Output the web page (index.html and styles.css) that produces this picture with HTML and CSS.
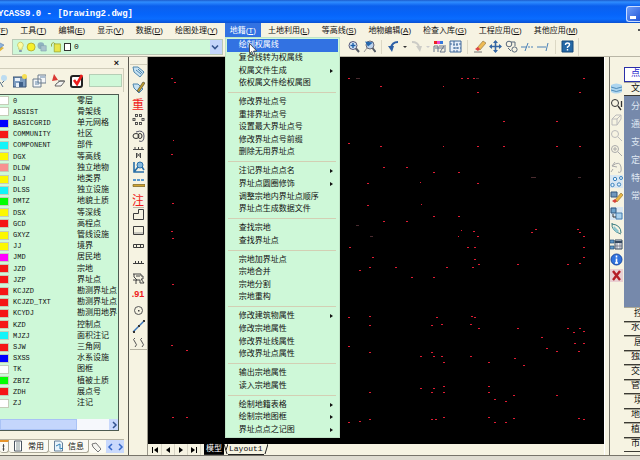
FILE: index.html
```
<!DOCTYPE html>
<html lang="zh-CN">
<head>
<meta charset="utf-8">
<title>CASS9.0 - [Drawing2.dwg]</title>
<link rel="stylesheet" href="styles.css">
</head>
<body>
<header class="titlebar">
  <h1 class="title">YCASS9.0 - [Drawing2.dwg]</h1>
  <button class="minimize" aria-label="最小化"></button>
</header>

<nav class="menubar">
  <button class="menu">文件(<u>F</u>)</button>
  <button class="menu">工具(<u>T</u>)</button>
  <button class="menu">编辑(<u>E</u>)</button>
  <button class="menu">显示(<u>V</u>)</button>
  <button class="menu">数据(<u>D</u>)</button>
  <button class="menu">绘图处理(<u>Y</u>)</button>
  <div class="menu-holder">
    <button class="menu open">地籍(<u>T</u>)</button>
    <div class="popup">
      <button class="item selected">绘制权属线</button>
      <button class="item">复合线转为权属线</button>
      <button class="item sub">权属文件生成</button>
      <button class="item">依权属文件绘权属图</button>
      <hr class="rule">
      <button class="item">修改界址点号</button>
      <button class="item">重排界址点号</button>
      <button class="item">设置最大界址点号</button>
      <button class="item">修改界址点号前缀</button>
      <button class="item">删除无用界址点</button>
      <hr class="rule">
      <button class="item sub">注记界址点点名</button>
      <button class="item sub">界址点圆圈修饰</button>
      <button class="item">调整宗地内界址点顺序</button>
      <button class="item">界址点生成数据文件</button>
      <hr class="rule">
      <button class="item">查找宗地</button>
      <button class="item">查找界址点</button>
      <hr class="rule">
      <button class="item">宗地加界址点</button>
      <button class="item">宗地合并</button>
      <button class="item">宗地分割</button>
      <button class="item">宗地重构</button>
      <hr class="rule">
      <button class="item sub">修改建筑物属性</button>
      <button class="item">修改宗地属性</button>
      <button class="item">修改界址线属性</button>
      <button class="item">修改界址点属性</button>
      <hr class="rule">
      <button class="item">输出宗地属性</button>
      <button class="item">读入宗地属性</button>
      <hr class="rule">
      <button class="item sub">绘制地籍表格</button>
      <button class="item sub">绘制宗地图框</button>
      <button class="item sub">界址点点之记图</button>
      <svg class="cursor" viewBox="0 0 9 13"><path d="M.5 .5v10l2.3-2 1.7 4 1.6-.7-1.6-3.8h3.2z" fill="#fff" stroke="#333" stroke-width=".8"/></svg>
    </div>
  </div>
  <button class="menu">土地利用(<u>L</u>)</button>
  <button class="menu">等高线(<u>S</u>)</button>
  <button class="menu">地物编辑(<u>A</u>)</button>
  <button class="menu">检查入库(<u>G</u>)</button>
  <button class="menu">工程应用(<u>C</u>)</button>
  <button class="menu">其他应用(<u>M</u>)</button>
  <button class="mdi-minimize" aria-label="最小化图形"></button>
</nav>

<div class="toolbar">
  <button class="icon half" aria-label="图层"><svg viewBox="0 0 13 13"><path d="M1 8l5-3 6 3-5 4z" fill="#e4b93a"/><path d="M1 5l5-3 6 3-5 4z" fill="#8fb4dd" stroke="#5d7fae" stroke-width=".6"/></svg></button>
  <div class="combo">
    <svg class="combo-icons" viewBox="0 0 54 13">
      <path d="M5 1a3.4 3.4 0 0 0-2 6v2h4v-2a3.4 3.4 0 0 0-2-6z" fill="#fdfca0" stroke="#b8a83a" stroke-width=".6"/><path d="M3.500 10h3v2h-3z" fill="#7d8fa8"/>
      <circle cx="17" cy="6.500" r="4.500" fill="#f7f02a" stroke="#aa9b22" stroke-width=".8"/>
      <circle cx="28" cy="5" r="3.800" fill="#8fb2c0"/><path d="M28 5h6v6h-6z" fill="#a9c3cc" stroke="#7a9aaa" stroke-width=".6"/>
      <path d="M40 6V3q2-3 4 0v2" fill="none" stroke="#93a02a"/><path d="M43 3h7v9h-7z" fill="#e9e64a" stroke="#93a02a" stroke-width=".8"/>
    </svg>
    <span class="swatch-box"></span>
    <select class="layer-select" aria-label="当前图层"><option>0</option></select>
    <span class="drop"><svg viewBox="0 0 10 12"><path d="M2 4.500l3 3 3-3" fill="none" stroke="#34548f" stroke-width="1.600"/></svg></span>
  </div>
  <div class="tools">
    <button class="icon" aria-label="缩放"><svg viewBox="0 0 13 13"><path d="M1 4l4 7" stroke="#6b7686" stroke-width="2"/></svg></button>
    <button class="icon" aria-label="缩放窗口"><svg viewBox="0 0 13 13"><circle cx="6" cy="5.500" r="4" fill="#d6e8f7" stroke="#557" /><path d="M6 3v5M3.500 5.500h5" stroke="#1f5fa8" stroke-width="1.400"/><path d="M9 8.500l3 3.500" stroke="#545b66" stroke-width="2"/></svg></button>
    <button class="icon" aria-label="缩放上一个"><svg viewBox="0 0 13 13"><circle cx="7" cy="5" r="4" fill="#bdd3ec" stroke="#667"/><path d="M2 1.500l8 1-5 4z" fill="#2467ae"/><path d="M9.500 8l3 4" stroke="#545b66" stroke-width="2"/><path d="M4 8l-3 4" stroke="#999" /></svg></button>
    <span class="split"></span>
    <button class="icon" aria-label="放弃"><svg viewBox="0 0 13 13"><path d="M11 2Q5 2 4 8" fill="none" stroke="#2c5fa6" stroke-width="2"/><path d="M1 6h6l-2 6z" fill="#2c5fa6"/></svg></button>
    <span class="caret"></span>
    <button class="icon" aria-label="重做"><svg viewBox="0 0 13 13"><path d="M2 2q6 0 7 5" fill="none" stroke="#ccccc6" stroke-width="2"/><path d="M6 6h6l-2 6z" fill="#ccccc6"/></svg></button>
    <span class="caret pale"></span>
    <button class="icon" aria-label="特性"><svg viewBox="0 0 13 13"><path d="M1 1h3v3H1z" fill="#e22"/><path d="M4 1h3v3H4z" fill="#e4c"/><path d="M7 1h3v3H7z" fill="#37d"/><path d="M1 12V6h4v6M6 6h5l-4 6h5V5M2 8h9" fill="none" stroke="#66758a"/></svg></button>
    <button class="icon" aria-label="设计中心"><svg viewBox="0 0 13 13"><path d="M1 1h11v11H1z" fill="#e6eef8" stroke="#3d6699"/><path d="M1 4h11M5 1v11M5 8h7M8 4v8" stroke="#3d6699" stroke-dasharray="2 1"/></svg></button>
    <span class="split"></span>
    <button class="icon" aria-label="删除"><svg viewBox="0 0 13 13"><path d="M4 8l6-7 3 2-6 7z" fill="#eebb53" stroke="#896d3d" stroke-width=".6"/><path d="M2 9l3-2 2 2-2 2z" fill="#d44"/><path d="M1 12h8" stroke="#777"/></svg></button>
    <button class="icon" aria-label="移动"><svg viewBox="0 0 13 13"><path d="M6.500 1v11M1 6.500h11" stroke="#3567a5" stroke-width="1.600"/><path d="M6.500 0l2.500 3H4zM6.500 13l2.500-3H4zM0 6.500L3 4v5zM13 6.500L10 4v5z" fill="#3567a5"/></svg></button>
    <button class="icon" aria-label="复制"><svg viewBox="0 0 13 13"><circle cx="4" cy="4" r="2.800" fill="none" stroke="#59687b"/><circle cx="9.500" cy="9.500" r="2.600" fill="none" stroke="#59687b"/><path d="M6 2h4v4M3 8l3 3" fill="none" stroke="#59687b"/></svg></button>
    <button class="icon" aria-label="修剪"><svg viewBox="0 0 13 13"><path d="M0 7h6M4 11l3-8" stroke="#4a81b8"/><path d="M7 7h6" stroke="#4a81b8" stroke-dasharray="2 1"/></svg></button>
    <button class="icon" aria-label="延伸"><svg viewBox="0 0 13 13"><path d="M0 7h9M9 11l2-8" stroke="#4a81b8"/></svg></button>
    <span class="split"></span>
    <button class="icon" aria-label="帮助"><svg viewBox="0 0 13 13"><path d="M1 1h11v11H1z" fill="#2568a6" stroke="#174a7c"/><path d="M4.500 5q0-2 2-2t2 1.700q0 1-2 2.300v1M6.500 9v1.500" fill="none" stroke="#fff" stroke-width="1.400"/></svg></button>
  </div>
</div>

<main class="workspace">
  <aside class="layers">
    <button class="close" aria-label="关闭">×</button>
    <div class="layer-tools">
      <button class="icon half" aria-label="选择"><svg viewBox="0 0 14 14"><path d="M3 1v10l3-3 3 5M8 2l4 3-4 4" fill="none" stroke="#557089"/><circle cx="10" cy="4" r="3" fill="#bcdcf1"/></svg></button>
      <button class="icon" aria-label="保存状态"><svg viewBox="0 0 14 14"><path d="M0 3h13v10H0z" fill="#7c9cc0" stroke="#344f71"/><path d="M2 4h5v3H2zM3 9h7v4H3z" fill="#e8f0f8"/><path d="M6 8h4v5H6z" fill="#3f5f88"/><circle cx="11.500" cy="2.500" r="2.500" fill="#f5de52"/></svg></button>
      <button class="icon" aria-label="图层复制"><svg viewBox="0 0 14 14"><path d="M6 1h8v8H6zM1 5h8v8H1z" fill="#f4f6f8" stroke="#6d7c8c"/><path d="M3 8h4M3 10h4M8 3h5" stroke="#6688aa"/></svg></button>
      <button class="icon" aria-label="删除图层"><svg viewBox="0 0 14 14"><path d="M3 0l4 6-6 1z" fill="#d93a35"/><path d="M5 10l4-3h5l-4 5H4zM7 7h6" fill="#f3f3f1" stroke="#666"/></svg></button>
      <button class="icon" aria-label="应用"><svg viewBox="0 0 14 14"><rect x="1" y="2" width="11" height="11" rx="2" fill="#fff" stroke="#222" stroke-width="2"/><path d="M4 6l3 4 5-9" fill="none" stroke="#ee1c1c" stroke-width="2.600"/></svg></button>
      <input class="filter" aria-label="图层过滤">
    </div>
    <div class="layer-box">
      <table class="layer-table">
        <tbody>
        <tr><td><i class="sw white"></i></td><td>0</td><td>零层</td></tr>
        <tr><td><i class="sw white"></i></td><td>ASSIST</td><td>骨架线</td></tr>
        <tr><td><i class="sw blue"></i></td><td>BASICGRID</td><td>单元网格</td></tr>
        <tr><td><i class="sw red"></i></td><td>COMMUNITY</td><td>社区</td></tr>
        <tr><td><i class="sw cyan"></i></td><td>COMPONENT</td><td>部件</td></tr>
        <tr><td><i class="sw yellow"></i></td><td>DGX</td><td>等高线</td></tr>
        <tr><td><i class="sw pink"></i></td><td>DLDW</td><td>独立地物</td></tr>
        <tr><td><i class="sw yellow"></i></td><td>DLJ</td><td>地类界</td></tr>
        <tr><td><i class="sw cyan"></i></td><td>DLSS</td><td>独立设施</td></tr>
        <tr><td><i class="sw green"></i></td><td>DMTZ</td><td>地貌土质</td></tr>
        <tr><td><i class="sw yellow"></i></td><td>DSX</td><td>等深线</td></tr>
        <tr><td><i class="sw red"></i></td><td>GCD</td><td>高程点</td></tr>
        <tr><td><i class="sw yellow"></i></td><td>GXYZ</td><td>管线设施</td></tr>
        <tr><td><i class="sw yellow"></i></td><td>JJ</td><td>境界</td></tr>
        <tr><td><i class="sw magenta"></i></td><td>JMD</td><td>居民地</td></tr>
        <tr><td><i class="sw red"></i></td><td>JZD</td><td>宗地</td></tr>
        <tr><td><i class="sw red"></i></td><td>JZP</td><td>界址点</td></tr>
        <tr><td><i class="sw red"></i></td><td>KCJZD</td><td>勘测界址点</td></tr>
        <tr><td><i class="sw red"></i></td><td>KCJZD_TXT</td><td>勘测界址点</td></tr>
        <tr><td><i class="sw red"></i></td><td>KCYDJ</td><td>勘测用地界</td></tr>
        <tr><td><i class="sw red"></i></td><td>KZD</td><td>控制点</td></tr>
        <tr><td><i class="sw cyan"></i></td><td>MJZJ</td><td>面积注记</td></tr>
        <tr><td><i class="sw red"></i></td><td>SJW</td><td>三角网</td></tr>
        <tr><td><i class="sw blue"></i></td><td>SXSS</td><td>水系设施</td></tr>
        <tr><td><i class="sw white"></i></td><td>TK</td><td>图框</td></tr>
        <tr><td><i class="sw green"></i></td><td>ZBTZ</td><td>植被土质</td></tr>
        <tr><td><i class="sw red"></i></td><td>ZDH</td><td>展点号</td></tr>
        <tr><td><i class="sw white"></i></td><td>ZJ</td><td>注记</td></tr>
        </tbody>
      </table>
      <div class="hscroll">
        <span class="thumb"></span>
        <button class="arrow" aria-label="向右滚动"><svg viewBox="0 0 8 8"><path d="M3 1l3 3-3 3" fill="none" stroke="#34548f" stroke-width="1.500"/></svg></button>
      </div>
    </div>
    <div class="panel-tabs">
      <button class="ptab active" aria-label="图层"><svg viewBox="0 0 3 12"><path d="M1 3v7M0 5h2M0 8h2" stroke="#333" stroke-width=".8"/></svg></button>
      <button class="ptab"><svg viewBox="0 0 10 12"><path d="M1.500 1h7v10h-7z" fill="#fff" stroke="#4a5560"/><path d="M3 3h4M3 5h4M3 7h4M3 9h4" stroke="#899"/></svg>常用</button>
      <button class="ptab"><svg viewBox="0 0 10 12"><path d="M1.500 1h6l2 2v8h-8z" fill="#e8f3fb" stroke="#66809a"/><path d="M3 6l4-2v5l3-1" fill="none" stroke="#2f7fb5"/></svg>信息</button>
      <button class="ptab last" aria-label="实体"><svg viewBox="0 0 10 12"><path d="M1 3l4-1 5 6-3 3-5-5z" fill="#f5f5f0" stroke="#777"/></svg></button>
      <button class="arrow" aria-label="上一页"><svg viewBox="0 0 8 8"><path d="M5 1L2 4l3 3" fill="none" stroke="#3568c8" stroke-width="1.500"/></svg></button>
      <button class="arrow" aria-label="下一页"><svg viewBox="0 0 8 8"><path d="M3 1l3 3-3 3" fill="none" stroke="#3568c8" stroke-width="1.500"/></svg></button>
    </div>
  </aside>

  <div class="vbar left">
    <div class="vtools long">
      <button class="icon" aria-label="标签"><svg viewBox="0 0 13 13"><path d="M1 2l5 0 6 5-4 5-6-5z" fill="#c6e2f3" stroke="#4f86ad"/><path d="M4 5l5 4M6 4l4 4" stroke="#4f86ad"/></svg></button>
      <button class="icon" aria-label="编辑标签"><svg viewBox="0 0 13 13"><path d="M1 3h5l5 5-4 4-5-5z" fill="#c6e2f3" stroke="#4f86ad"/><path d="M5 10l6-9 2 1-6 9z" fill="#c3a030" stroke="#3b3b30" stroke-width=".6"/></svg></button>
      <button class="icon red-text">重</button>
      <button class="icon" aria-label="节点"><svg viewBox="0 0 13 13"><g fill="none" stroke="#444" stroke-width=".9"><rect x="3.500" y="1.500" width="2" height="2"/><rect x="7.500" y="1.500" width="2" height="2"/><rect x="1" y="5.500" width="2" height="2"/><rect x="10" y="5.500" width="2" height="2"/><rect x="3.500" y="9.500" width="2" height="2"/><rect x="7.500" y="9.500" width="2" height="2"/></g></svg></button>
      <button class="icon" aria-label="旋转"><svg viewBox="0 0 13 13"><ellipse cx="4" cy="7" rx="3" ry="2.500" fill="none" stroke="#333"/><ellipse cx="8" cy="7" rx="2" ry="2.500" fill="none" stroke="#333"/><path d="M4 3q8-3 8 4t-5 5" fill="none" stroke="#556"/></svg></button>
      <button class="icon" aria-label="断开"><svg viewBox="0 0 13 13"><path d="M1 4.500h11M3 2v3M6.500 2v3M10 2v3M4.500 8v5M8.500 8v5M4.500 8l4 4M8.500 8l-4 4" stroke="#444"/></svg></button>
      <button class="icon" aria-label="坐标"><svg viewBox="0 0 13 13"><path d="M2 1v10h10M2 11l4-5" fill="none" stroke="#286fa8" stroke-width="1.600"/><circle cx="8" cy="4" r="3" fill="#83b9df" stroke="#286fa8"/><path d="M10 6l2 3" stroke="#286fa8" stroke-width="1.600"/></svg></button>
      <button class="icon" aria-label="距离"><svg viewBox="0 0 13 13"><path d="M1 3h12" stroke="#277bc5" stroke-width="1.500" stroke-dasharray="3 1"/><path d="M1 7.500h12v2H1z" fill="#d0a32f" stroke="#77611f" stroke-width=".7"/></svg></button>
      <button class="icon red-text">注</button>
      <button class="icon ruled" aria-label="多点房屋"><svg viewBox="0 0 13 13"><path d="M1.500 11.500v-6h5v-4h5v10z" fill="none" stroke="#3b3b3b"/></svg></button>
      <button class="icon" aria-label="四点房屋"><svg viewBox="0 0 13 13"><path d="M1.500 2.500h10v8h-10z" fill="none" stroke="#3b3b3b"/><path d="M2 9h9" stroke="#999"/></svg></button>
      <button class="icon" aria-label="依比例围墙"><svg viewBox="0 0 13 13"><path d="M1.500 4.500h10v3h-10zM4.500 5v2M8.500 5v2" fill="none" stroke="#3b3b3b"/></svg></button>
      <button class="icon" aria-label="陡坎"><svg viewBox="0 0 13 13"><path d="M1 7.500h11M3.500 5v3M6.500 5v3M9.500 5v3" stroke="#3b3b3b"/></svg></button>
      <button class="icon" aria-label="复合线"><svg viewBox="0 0 13 13"><path d="M1 2h8v2h2v3H9l3 4H8V8H4v4M2 2v3l3 3H1M4 4h4" fill="none" stroke="#444"/></svg></button>
      <button class="icon red-text num">.91</button>
      <button class="icon" aria-label="控制点"><svg viewBox="0 0 13 13"><circle cx="6.500" cy="6.500" r="4" fill="none" stroke="#555"/><path d="M6 6h1.500v1.500H6z" fill="#444"/></svg></button>
      <button class="icon" aria-label="直线"><svg viewBox="0 0 13 13"><path d="M1 12L12 1" stroke="#3974b8" stroke-width="1.400"/><path d="M1 11h2v2H1zM11 0h2v2h-2zM6 5h2v2H6z" fill="#333"/></svg></button>
      <button class="icon" aria-label="曲线"><svg viewBox="0 0 13 13"><path d="M3 2q-3 1 0 4t0 5M10 2q-3 1 0 4t0 5" fill="none" stroke="#555"/></svg></button>
    </div>
  </div>

  <section class="drawing">
    <svg class="canvas" viewBox="0 0 456 387" preserveAspectRatio="xMinYMin meet">
      <path class="point" transform="translate(0 .5)" d="M23 21h2M26 25h2M25 83h1M23 97h2M24 146h2M23 174h2M24 181h2M24 227h2M23 288h2M38 293h2M24 360h2M38 360h2M200 21h2M232 29h2M295 29h1M313 21h2M319 21h2M325 21h2M329 35h2M435 21h2M431 35h2M355 64h2M408 64h2M200 86h2M232 89h2M295 89h1M329 89h2M355 89h2M408 89h2M431 89h2M235 110h2M258 110h2M285 115h2M310 115h2M219 126h2M272 125h1M329 126h2M219 148h2M273 147h1M235 164h2M258 164h2M285 159h2M310 159h2M313 173h1M310 179h1M325 174h2M329 179h2M383 175h2M387 172h2M429 172h2M431 175h2M435 179h2M201 190h2M319 190h2M326 190h2M435 190h2M224 200h2M326 202h2M435 200h2M211 213h2M221 210h2M247 210h2M263 220h2M285 220h2M298 210h2M324 210h2M330 207h2M369 207h2M419 207h2M431 206h2M200 260h2M221 259h2M221 268h2M288 260h2M283 268h2M293 267h2M323 259h2M326 260h2M322 267h2M330 271h2M369 271h2M419 271h2M425 275h2M431 271h2M435 274h2M393 280h2M426 286h2M435 286h2M398 291h2M408 294h2M430 294h2M200 289h2M221 295h2M283 295h2M272 299h2M285 299h2M293 299h2M295 305h2M322 299h2M340 305h2M366 301h2M375 308h2M272 331h2M285 331h2M295 329h2M283 335h2M295 335h2M221 335h2M340 329h2M340 335h2M346 342h2M365 338h2M357 344h2M408 338h2M200 365h2M211 364h2M221 362h2M283 362h2M287 362h2M295 360h2M340 360h2M346 365h2M357 365h2M365 361h2M430 361h2M435 362h2"/>
      <path class="faint" transform="translate(0 .5)" d="M383 120h5M430 120h3M208 168h3M222 179h3M208 21h4M328 21h3"/>
    </svg>
    <div class="sheet-tabs">
      <button class="step" aria-label="第一页"><svg viewBox="0 0 8 8"><path d="M1.500 1v6" stroke="#000"/><path d="M7 1v6L3 4z"/></svg></button>
      <button class="step" aria-label="前一页"><svg viewBox="0 0 8 8"><path d="M6 1v6L2 4z"/></svg></button>
      <button class="step" aria-label="后一页"><svg viewBox="0 0 8 8"><path d="M2 1v6l4-3z"/></svg></button>
      <button class="step" aria-label="最后一页"><svg viewBox="0 0 8 8"><path d="M6.500 1v6" stroke="#000"/><path d="M1 1v6l4-3z"/></svg></button>
      <button class="sheet current">模型</button>
      <svg class="slant" viewBox="0 0 4 10"><path d="M0 0l3 10M4 0L2 6" stroke="#222" fill="none"/></svg>
      <button class="sheet">Layout1</button>
      <svg class="slant" viewBox="0 0 4 10"><path d="M4 0L1 10" stroke="#222" fill="none"/></svg>
    </div>
  </section>

  <div class="vbar right">
    <div class="vtools short">
      <button class="icon" aria-label="重画"><svg viewBox="0 0 13 13"><path d="M1 3q5-3 11 0v7q-6 3-11 0z" fill="#add5ef"/><path d="M1 5q5 3 11 0M1 8q5 3 11 0" fill="none" stroke="#4e8bb8"/></svg></button>
      <button class="icon" aria-label="实时缩放"><svg viewBox="0 0 13 13"><circle cx="5" cy="5" r="3.500" fill="none" stroke="#333"/><path d="M8 8l3 4M11.500 3v6" stroke="#333" stroke-width="1.300"/></svg></button>
      <button class="icon" aria-label="平移"><svg viewBox="0 0 13 13"><path d="M2 12V6l4-4h5v4l-4 6zM2 6h5v6M7 6l4-4" fill="none" stroke="#bbb"/></svg></button>
      <button class="icon" aria-label="窗口缩放"><svg viewBox="0 0 13 13"><circle cx="5" cy="5" r="3.500" fill="none" stroke="#bbb"/><path d="M8 8l4 4" stroke="#bbb"/></svg></button>
      <button class="icon" aria-label="缩放全图"><svg viewBox="0 0 13 13"><circle cx="5" cy="5" r="3.500" fill="none" stroke="#aaa"/><path d="M8 8l4 4M5 3v4M3 5h4" stroke="#aaa"/></svg></button>
      <button class="icon" aria-label="前图"><svg viewBox="0 0 13 13"><path d="M5 2L2 6l5 1M2 6q8-6 9 1t-3 5M3 9l-2 3" fill="none" stroke="#aaa"/></svg></button>
      <button class="icon tint" aria-label="特性匹配"><svg viewBox="0 0 13 13"><g fill="#e6f4fd" stroke="#3b82bd"><circle cx="5" cy="4" r="1.700"/><circle cx="11" cy="3" r="1.500"/><circle cx="2.500" cy="10" r="1.700"/><circle cx="9" cy="9.500" r="1.700"/></g></svg></button>
      <button class="icon" aria-label="擦除"><svg viewBox="0 0 13 13"><path d="M1 1h6v5H1z" fill="#7098bd" stroke="#33567c"/><path d="M5 9l6-7 2 2-6 7z" fill="#e8b646" stroke="#8b6b24" stroke-width=".6"/><path d="M2 10l3-2 2 2-2 2z" fill="#d9443b"/></svg></button>
      <button class="icon tint" aria-label="复制块"><svg viewBox="0 0 13 13"><path d="M1 1h5v5H1z" fill="#6fa3cc" stroke="#33567c"/><path d="M6 6h6v6H6z" fill="#a9d1ee" stroke="#4a7eac"/><path d="M3 7v3h3" fill="none" stroke="#333"/></svg></button>
      <button class="icon" aria-label="查询"><svg viewBox="0 0 13 13"><path d="M2 1q-1 8 9 11M2 2q9 1 9 9" fill="none" stroke="#3a7c80"/><path d="M4 4l5 5-2 2-4-4z" fill="#8ec6cd"/></svg></button>
      <button class="icon" aria-label="属性表"><svg viewBox="0 0 13 13"><path d="M0 2h4v3H0zM0 8h4v3H0z" fill="#5f96c6" stroke="#244d7a" stroke-width=".7"/><path d="M5 2h7v9H5z" fill="#e8edf3" stroke="#34485f"/><path d="M5 4h7" stroke="#34485f" stroke-width="2"/><path d="M7 5v6M10 5v6M5 8h7" stroke="#667" stroke-width=".7"/></svg></button>
      <button class="icon" aria-label="信息"><svg viewBox="0 0 13 13"><circle cx="6.500" cy="6.500" r="5.500" fill="#2f72de" stroke="#1746a0"/><path d="M6.500 2.500v2M6.500 5.500v5M5 10h3" stroke="#fff" stroke-width="1.600"/></svg></button>
      <button class="icon rose" aria-label="删除实体"><svg viewBox="0 0 13 13"><path d="M3 2l7 9M10 2L3 11" stroke="#b51d26" stroke-width="2.400"/></svg></button>
    </div>
  </div>

  <aside class="symbols">
    <button class="sym picked">点</button>
    <button class="sym head">文</button>
    <div class="sym-body">
      <button class="entry">分</button>
      <button class="entry">通</button>
      <button class="entry">支</button>
      <button class="entry">定</button>
      <button class="entry">特</button>
      <button class="entry">常</button>
    </div>
    <div class="sym-list">
      <button class="sym inset">控</button>
      <button class="sym">水</button>
      <button class="sym inset">居</button>
      <button class="sym">独</button>
      <button class="sym">交</button>
      <button class="sym">管</button>
      <button class="sym inset">境</button>
      <button class="sym">地</button>
      <button class="sym">植</button>
      <button class="sym">市</button>
    </div>
  </aside>
</main>
<footer class="edge"></footer>
</body>
</html>
```
FILE: styles.css
```
:root {
  --face: #f6f3e2;
  --mint: #cef8d8;
}

* { box-sizing: border-box; }

body {
  margin: 0;
  height: 100vh;
  display: flex;
  flex-direction: column;
  overflow: hidden;
  background: var(--face);
  color: #111;
  font: 8px/11px "Liberation Mono", "Noto Sans CJK SC", monospace;
}

button, input, select {
  margin: 0;
  padding: 0;
  border: 0;
  background: none;
  color: inherit;
  font: inherit;
  white-space: nowrap;
}

svg { display: block; }

/* Title bar */
.titlebar {
  display: flex;
  justify-content: space-between;
  align-items: center;
  height: 23px;
  padding-top: 4px;
  background: linear-gradient(#1d5ccc 0, #2f8dff 2px, #0b60ee 6px, #0664fa 14px, #0a6cff 19px, #0a50d2 23px);
}

.title {
  margin: 0 0 0 -2px;
  color: #fff;
  font: bold 9px/14px "Liberation Mono", monospace;
}

.minimize {
  width: 14px;
  height: 16px;
  border: 1px solid #c9dcff;
  border-right: 0;
  border-radius: 3px 0 0 3px;
  background: linear-gradient(#fff, #fff) 3px 9px / 6px 3px no-repeat, linear-gradient(135deg, #6f9ef8, #2257d8);
}

/* Menu bar and its open menu */
.menubar {
  display: flex;
  gap: 2px;
  height: 14px;
  margin-left: -23px;
  font-family: "Liberation Sans", "Noto Sans CJK SC", sans-serif;
}

.menu {
  height: 14px;
  padding: 0 5px;
}

.menu.open {
  background: #3272e2;
  color: #fff;
}

.mdi-minimize {
  align-self: center;
  width: 2px;
  height: 2px;
  margin-left: auto;
  background: #555;
}

.menu-holder { position: relative; }

.popup {
  position: absolute;
  z-index: 2;
  top: 14px;
  left: 0;
  width: 115px;
  height: 401px;
  padding: 1px;
  display: flex;
  flex-direction: column;
  border: 1px solid #bfe3c6;
  background: var(--mint);
}

.item {
  flex: 2 1 0;
  min-height: 0;
  display: flex;
  align-items: center;
  justify-content: space-between;
  padding: 0 5px 0 12px;
  line-height: 8px;
  text-align: left;
}

.item.selected {
  background: #3272e2;
  color: #fff;
}

.item.sub::after {
  content: "";
  border: 2px solid transparent;
  border-left: 3px solid #111;
  border-right: 0;
}

.rule {
  flex: 1 1 0;
  width: 108px;
  margin: 0 auto;
  border: 0;
  background: linear-gradient(#d3cfb4, #d3cfb4) center / 100% 1px no-repeat;
}

.cursor {
  position: absolute;
  top: 5px;
  left: 23px;
  width: 9px;
  height: 13px;
}

/* Main toolbar */
.toolbar {
  display: flex;
  align-items: center;
  height: 20px;
  border-bottom: 1px solid #b9b6a6;
}

.icon {
  flex: none;
  width: 13px;
  height: 13px;
}

.icon svg {
  width: 100%;
  height: 100%;
}

.toolbar .half {
  margin-left: -8px;
  margin-right: 7px;
}

.combo {
  display: flex;
  align-items: center;
  width: 211px;
  height: 16px;
  padding-left: 3px;
  border: 1px solid #b9c9b5;
  background: var(--mint);
}

.combo-icons {
  width: 48px;
  height: 12px;
}

.swatch-box {
  width: 7px;
  height: 8px;
  border: 1px solid #333;
  background: #fff;
}

.layer-select {
  flex: 1;
  padding-left: 3px;
  appearance: none;
}

.drop {
  display: flex;
  align-items: center;
  width: 12px;
  height: 14px;
  background: #c3d5fb;
}

.drop svg { width: 10px; }

.tools {
  display: flex;
  align-items: center;
  gap: 3px;
  height: 18px;
  margin-left: 108px;
  padding-right: 4px;
  border-right: 1px solid #d8d5c4;
}

.split {
  width: 1px;
  height: 14px;
  margin: 0 2px;
  background: #dcd8c5;
}

.caret {
  width: 4px;
  border: 2px solid transparent;
  border-top-color: #333;
  border-bottom: 0;
}

.caret.pale { border-top-color: #ccc; }

/* Workspace */
.workspace {
  flex: 1;
  min-height: 0;
  display: flex;
}

.layers {
  display: flex;
  flex-direction: column;
  width: 129px;
  padding: 1px 0 2px;
  border-right: 1px solid #5a5850;
}

.close {
  align-self: flex-end;
  width: 9px;
  height: 10px;
  margin-right: 7px;
  font: bold 9px/9px "Liberation Sans", sans-serif;
}

.layer-tools {
  display: flex;
  align-items: center;
  gap: 5px;
  height: 24px;
  margin-right: 4px;
  border-top: 1px solid #d0cdba;
  border-right: 1px solid #d0cdba;
}

.layer-tools .icon {
  width: 14px;
  height: 14px;
}

.layer-tools .half { margin-left: -6px; }

.filter {
  width: 33px;
  height: 13px;
  border: 1px solid #b5cfb6;
  background: var(--mint);
}

.layer-box {
  flex: 1;
  display: flex;
  flex-direction: column;
  justify-content: space-between;
  width: 119px;
  margin: 2px 0 8px;
  border: 1px solid #4c5a50;
  border-left: 0;
  background: var(--mint);
  overflow: hidden;
}

.layer-table {
  width: 118px;
  height: 314px;
  table-layout: fixed;
  border-collapse: collapse;
  line-height: 10px;
}

.layer-table td {
  padding: 0;
  white-space: nowrap;
}

.layer-table td:nth-child(1) { width: 13px; }
.layer-table td:nth-child(2) { width: 64px; font-size: 7px; }

.sw {
  display: block;
  width: 9px;
  height: 9px;
  border: 1px solid #c4cdb8;
  border-left: 0;
}

.white { background: #fff; }
.blue { background: #00f; }
.red { background: #f51616; }
.cyan { background: #12f4f8; }
.yellow { background: #fcf800; }
.pink { background: #f89090; }
.green { background: #0f0; }
.magenta { background: #f0f; }

.hscroll {
  display: flex;
  justify-content: space-between;
  height: 11px;
  background: #f6f8fc;
}

.thumb {
  width: 77px;
  border: 1px solid #a9c2f5;
  background: #c4d6fc;
}

.arrow {
  display: flex;
  align-items: center;
  justify-content: center;
  width: 9px;
  background: #c9d9fc;
}

.arrow svg { width: 8px; height: 8px; }

.panel-tabs {
  display: flex;
  height: 14px;
  margin-right: 4px;
  border-top: 1px solid #b5b2a2;
}

.ptab {
  display: flex;
  align-items: center;
  gap: 5px;
  padding: 0 4px;
  border: 1px solid #aaa898;
  border-top: 0;
  border-left: 0;
  border-radius: 0 0 3px 3px;
  background: #fbfaf3;
}

.ptab svg { width: 10px; height: 12px; }

.ptab.active {
  width: 9px;
  padding: 0;
  border-top: 2px solid #e8952a;
}

.ptab.last {
  flex: 1;
  padding: 0 2px;
  border: 0;
}

.vbar {
  display: flex;
  justify-content: center;
  padding-top: 7px;
}

.vbar.left {
  width: 19px;
  border-right: 1px solid #99968a;
}

.vtools {
  display: flex;
  flex-direction: column;
  justify-content: space-between;
  align-items: center;
}

.long {
  height: 286px;
  width: 17px;
  border-top: 1px solid #d0cdba;
  border-bottom: 1px solid #b5b2a2;
}

.red-text {
  color: #f01a1a;
  font: 12px/13px "Noto Sans CJK SC", sans-serif;
}

.red-text.num { font: bold 9px/13px "Liberation Sans", sans-serif; }

.ruled { box-shadow: 0 -2px 0 -1px #bbb8a8; }

.drawing {
  flex: 1;
  min-width: 0;
  display: flex;
  flex-direction: column;
}

.canvas {
  flex: 1;
  min-height: 0;
  width: 100%;
  background: #000;
}

.point { stroke: #e01c34; }
.faint { stroke: #4a2b2f; }

.sheet-tabs {
  display: flex;
  height: 11px;
  padding-left: 1px;
}

.step {
  display: flex;
  align-items: center;
  justify-content: center;
  width: 13px;
  border-right: 1px solid #d8d5c5;
}

.step svg { width: 8px; height: 8px; }

.sheet {
  padding: 0 1px;
  line-height: 10px;
  border-bottom: 1px solid #222;
}

.sheet.current {
  margin-left: 3px;
  padding: 0 2px;
  background: #000;
  color: #fff;
}

.slant { width: 4px; height: 10px; }

.vbar.right {
  width: 20px;
  padding-top: 25px;
  padding-left: 4px;
  border-left: 1px solid #fff;
  background: linear-gradient(#77746a, #77746a) 4px 0 / 1px 100% no-repeat;
}

.short {
  height: 200px;
  width: 15px;
}

.tint { background: #d9e7f2; }
.rose { background: #e9cfd2; }

.symbols {
  display: flex;
  flex-direction: column;
  width: 16px;
  padding: 10px 0 3px;
  overflow: hidden;
  font-size: 9px;
}

.sym {
  flex: 1;
  min-height: 0;
  width: 16px;
  padding-left: 7px;
  overflow: hidden;
  border-top: 1px solid #aaa898;
  border-bottom: 1px solid #3c3a34;
  line-height: 11px;
  text-align: left;
}

.sym.inset { padding-left: 10px; }

.sym.picked {
  flex: none;
  height: 15px;
  padding-left: 6px;
  border: 1px solid #2a2fa8;
  border-right: 0;
  background: #fff;
  color: #2020c8;
}

.sym.head {
  flex: none;
  height: 14px;
}

.sym-body {
  display: flex;
  flex-direction: column;
  gap: 5px;
  height: 211px;
  padding: 5px 0 0 7px;
  background: #7689ab;
  color: #dfe7f2;
}

.entry {
  height: 13px;
  text-align: left;
}

.sym-list {
  flex: 1;
  min-height: 0;
  display: flex;
  flex-direction: column;
}

.edge {
  height: 5px;
  border-top: 1px solid #77746a;
  background: #dedbd0;
}
```
